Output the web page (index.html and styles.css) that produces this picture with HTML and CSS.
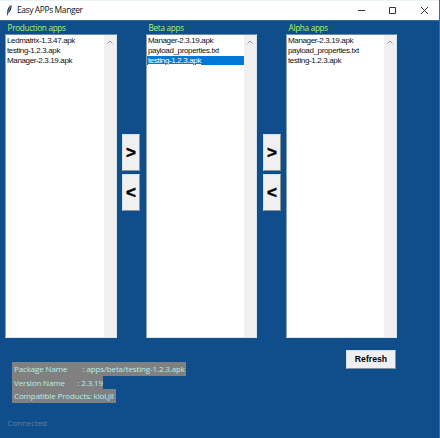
FILE: index.html
```html
<!DOCTYPE html>
<html lang="en">
<head>
<meta charset="utf-8">
<title>Easy APPs Manger</title>
<link rel="stylesheet" href="styles.css">
</head>
<body>
<div class="window">
  <header class="titlebar">
    <svg class="feather" viewBox="0 0 8 14"><path d="M1 12.5 1.4 8C1.7 4.5 3.5 1.5 6.2.6 7 3.5 5.8 7.7 2.5 10L1.6 13Z" fill="#26364c"/><path d="M2 10 5.5 2.2" stroke="#7da0c4" stroke-width=".9" fill="none"/></svg>
    <h1 class="title">Easy APPs Manger</h1>
    <svg class="controls" viewBox="0 0 72 12"><path d="M0 6.5H7M31.500 3.500H37.500V9.500H31.500ZM63 3 70 10M70 3 63 10" fill="none" stroke="#333" stroke-width="1"/></svg>
  </header>
  <main class="content">
    <div class="lists">
      <section class="column">
        <h2 class="label">Production apps</h2>
        <div class="listbox">
          <ul class="items"><li><span>Ledmatrix-1.3.47.apk</span></li><li><span>testing-1.2.3.apk</span></li><li><span>Manager-2.3.19.apk</span></li></ul>
          <div class="scroll"><svg viewBox="0 0 6 4"><path d="M.5 3.500 3 1 5.500 3.500"/></svg></div>
        </div>
      </section>
      <div class="movers"><button class="move">&gt;</button><button class="move">&lt;</button></div>
      <section class="column">
        <h2 class="label">Beta apps</h2>
        <div class="listbox">
          <ul class="items"><li><span>Manager-2.3.19.apk</span></li><li><span>payload_properties.txt</span></li><li class="selected"><span>testing-1.2.3.apk</span></li></ul>
          <div class="scroll"><svg viewBox="0 0 6 4"><path d="M.5 3.500 3 1 5.500 3.500"/></svg></div>
        </div>
      </section>
      <div class="movers"><button class="move">&gt;</button><button class="move">&lt;</button></div>
      <section class="column">
        <h2 class="label">Alpha apps</h2>
        <div class="listbox">
          <ul class="items"><li><span>Manager-2.3.19.apk</span></li><li><span>payload_properties.txt</span></li><li><span>testing-1.2.3.apk</span></li></ul>
          <div class="scroll"><svg viewBox="0 0 6 4"><path d="M.5 3.500 3 1 5.500 3.500"/></svg></div>
        </div>
      </section>
    </div>
    <div class="bottom">
      <div class="details">
        <p class="wide"><span class="name">Package Name</span><span>: apps/beta/testing-1.2.3.apk</span></p>
        <p class="mid"><span class="name">Version Name</span><span>: 2.3.19</span></p>
        <p class="short">Compatible Products: klol,jil</p>
      </div>
      <button class="refresh">Refresh</button>
    </div>
    <div class="status">Connected</div>
  </main>
</div>
</body>
</html>
```
FILE: styles.css
```css
* { box-sizing: border-box; margin: 0; padding: 0; }
body { width: 440px; height: 438px; overflow: hidden; font-family: "Open Sans", "Noto Sans", sans-serif; }
.window { height: 438px; display: flex; flex-direction: column; background: #104e8b; border-right: 1px solid #1a74c4; }
.titlebar { height: 21px; flex: none; display: flex; align-items: center; padding: 0 9px 1px 6px; background: #fff; border-top: 1px solid #e8f4f6; border-bottom: 1px solid #347092; }
.feather { width: 7px; height: 13px; }
.title { flex: 1; margin-left: 4px; font-size: 8.5px; letter-spacing: -.42px; line-height: 14px; font-weight: 400; color: #111; white-space: nowrap; }
.controls { width: 72px; height: 12px; }
.content { flex: 1; }
.lists { display: flex; height: 317px; padding-left: 5px; }
.column { width: 112px; flex: none; }
.column:nth-child(n+2) { width: 111px; }
.label { height: 13px; padding-left: 2.500px; font-size: 8.2px; letter-spacing: -.3px; line-height: 14px; font-weight: 400; color: #b3ee74; white-space: nowrap; }
.listbox { height: 304px; display: flex; background: #fff; border: 1px solid #d6e5ee; border-top-color: #6f8ca6; border-left-color: #8aa3b8; }
.items { flex: 1; padding-top: 1px; list-style: none; font-family: "Liberation Sans", sans-serif; font-size: 8px; letter-spacing: -.36px; line-height: 10px; color: #111; white-space: nowrap; }
.items li { height: 10px; padding-left: 1px; }
.items .selected { height: 9px; line-height: 9px; background: #0078d7; color: #fff; text-decoration: underline; }
.scroll { width: 12px; flex: none; padding: 5px 3px; background: #f0f0f0; }
.scroll svg { display: block; width: 6px; height: 4px; fill: none; stroke: #959595; stroke-width: 1; }
.movers { width: 29px; flex: none; display: flex; flex-direction: column; align-items: flex-start; gap: 3px; padding: 113px 0 0 5px; }
.movers:nth-child(4) { padding-left: 6px; }
button { border: 1px solid #d8e2ea; border-right-color: #8795a0; border-bottom-color: #8795a0; background: #f0f0f0; color: #000; font-family: "Liberation Sans", sans-serif; font-weight: 700; }
.move { width: 18px; height: 37px; font-size: 17px; line-height: 35px; -webkit-text-stroke: .5px #000; }
.bottom { display: flex; justify-content: space-between; height: 77px; padding: 12px 43px 0 12px; }
.details { display: flex; flex-direction: column; align-items: flex-start; padding-top: 12px; font-size: 8px; letter-spacing: -.13px; line-height: 13px; color: #b4eeea; white-space: nowrap; }
.details p { display: flex; height: 13.500px; padding-left: 2px; background: #808080; }
.wide { width: 174px; }
.mid { width: 91px; }
.short { width: 104px; }
.wide .name { width: 68.500px; }
.mid .name { width: 63.500px; }
.refresh { width: 50px; height: 19px; font-size: 8.700px; line-height: 17px; }
.status { padding-left: 7.500px; font-size: 8px; letter-spacing: -.1px; line-height: 15px; color: #5d7f9e; }
```
